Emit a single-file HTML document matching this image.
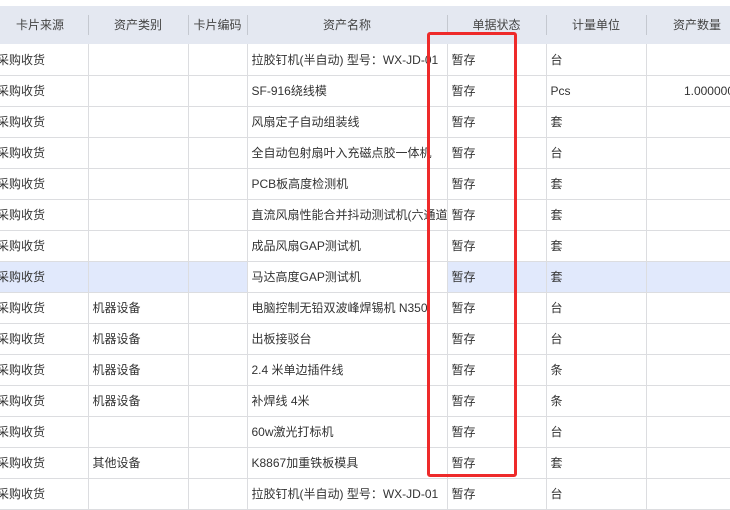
<!DOCTYPE html>
<html><head><meta charset="utf-8"><style>
*{margin:0;padding:0;box-sizing:border-box}
body{width:730px;height:495px;overflow:hidden;background:#fff;position:relative;font-family:"Liberation Sans","Noto Sans CJK SC",sans-serif;font-size:12px;color:#333}
.hdr{position:absolute;left:0;top:6px;width:730px;height:38px;background:#e4e8f1}
.h{position:absolute;top:0;height:38px;line-height:38px;text-align:center;color:#444}
.sep{position:absolute;top:9px;width:1px;height:20px;background:#c4c8d0}
table{position:absolute;left:-8px;top:44px;width:742px;border-collapse:collapse;table-layout:fixed}
td{height:31px;border-bottom:1px solid #dcdde0;border-left:1px solid #dcdde0;padding:0 0 0 4px;white-space:nowrap;overflow:hidden;vertical-align:middle}
td:first-child{border-left:none;padding-left:5px}
tr.hl td{background:#e1e9fc}
tr.hl td.n{background:#fff}
td.r{text-align:right;padding-right:0}
.box{position:absolute;left:427px;top:32px;width:90px;height:445px;border:3px solid #ee2a2a;border-radius:3px}
</style></head><body>
<div class="hdr">
<div class="h" style="left:-8px;width:96px">卡片来源</div>
<div class="sep" style="left:88px"></div>
<div class="h" style="left:88px;width:100px">资产类别</div>
<div class="sep" style="left:188px"></div>
<div class="h" style="left:188px;width:59px">卡片编码</div>
<div class="sep" style="left:247px"></div>
<div class="h" style="left:247px;width:200px">资产名称</div>
<div class="sep" style="left:447px"></div>
<div class="h" style="left:447px;width:99px">单据状态</div>
<div class="sep" style="left:546px"></div>
<div class="h" style="left:546px;width:100px">计量单位</div>
<div class="sep" style="left:646px"></div>
<div class="h" style="left:646px;width:102px">资产数量</div>
</div>
<table>
<colgroup><col style="width:96px"><col style="width:100px"><col style="width:59px"><col style="width:200px"><col style="width:99px"><col style="width:100px"><col style="width:88px"></colgroup>
<tr><td>采购收货</td><td></td><td></td><td class="n">拉胶钉机(半自动) 型号：WX-JD-01</td><td>暂存</td><td>台</td><td></td></tr>
<tr><td>采购收货</td><td></td><td></td><td class="n">SF-916绕线模</td><td>暂存</td><td>Pcs</td><td class="r">1.000000</td></tr>
<tr><td>采购收货</td><td></td><td></td><td class="n">风扇定子自动组装线</td><td>暂存</td><td>套</td><td></td></tr>
<tr><td>采购收货</td><td></td><td></td><td class="n">全自动包射扇叶入充磁点胶一体机</td><td>暂存</td><td>台</td><td></td></tr>
<tr><td>采购收货</td><td></td><td></td><td class="n">PCB板高度检测机</td><td>暂存</td><td>套</td><td></td></tr>
<tr><td>采购收货</td><td></td><td></td><td class="n">直流风扇性能合并抖动测试机(六通道)</td><td>暂存</td><td>套</td><td></td></tr>
<tr><td>采购收货</td><td></td><td></td><td class="n">成品风扇GAP测试机</td><td>暂存</td><td>套</td><td></td></tr>
<tr class="hl"><td>采购收货</td><td></td><td></td><td class="n">马达高度GAP测试机</td><td>暂存</td><td>套</td><td></td></tr>
<tr><td>采购收货</td><td>机器设备</td><td></td><td class="n">电脑控制无铅双波峰焊锡机 N350</td><td>暂存</td><td>台</td><td></td></tr>
<tr><td>采购收货</td><td>机器设备</td><td></td><td class="n">出板接驳台</td><td>暂存</td><td>台</td><td></td></tr>
<tr><td>采购收货</td><td>机器设备</td><td></td><td class="n">2.4 米单边插件线</td><td>暂存</td><td>条</td><td></td></tr>
<tr><td>采购收货</td><td>机器设备</td><td></td><td class="n">补焊线 4米</td><td>暂存</td><td>条</td><td></td></tr>
<tr><td>采购收货</td><td></td><td></td><td class="n">60w激光打标机</td><td>暂存</td><td>台</td><td></td></tr>
<tr><td>采购收货</td><td>其他设备</td><td></td><td class="n">K8867加重铁板模具</td><td>暂存</td><td>套</td><td></td></tr>
<tr><td>采购收货</td><td></td><td></td><td class="n">拉胶钉机(半自动) 型号：WX-JD-01</td><td>暂存</td><td>台</td><td></td></tr>
</table>
<div class="box"></div>
</body></html>
